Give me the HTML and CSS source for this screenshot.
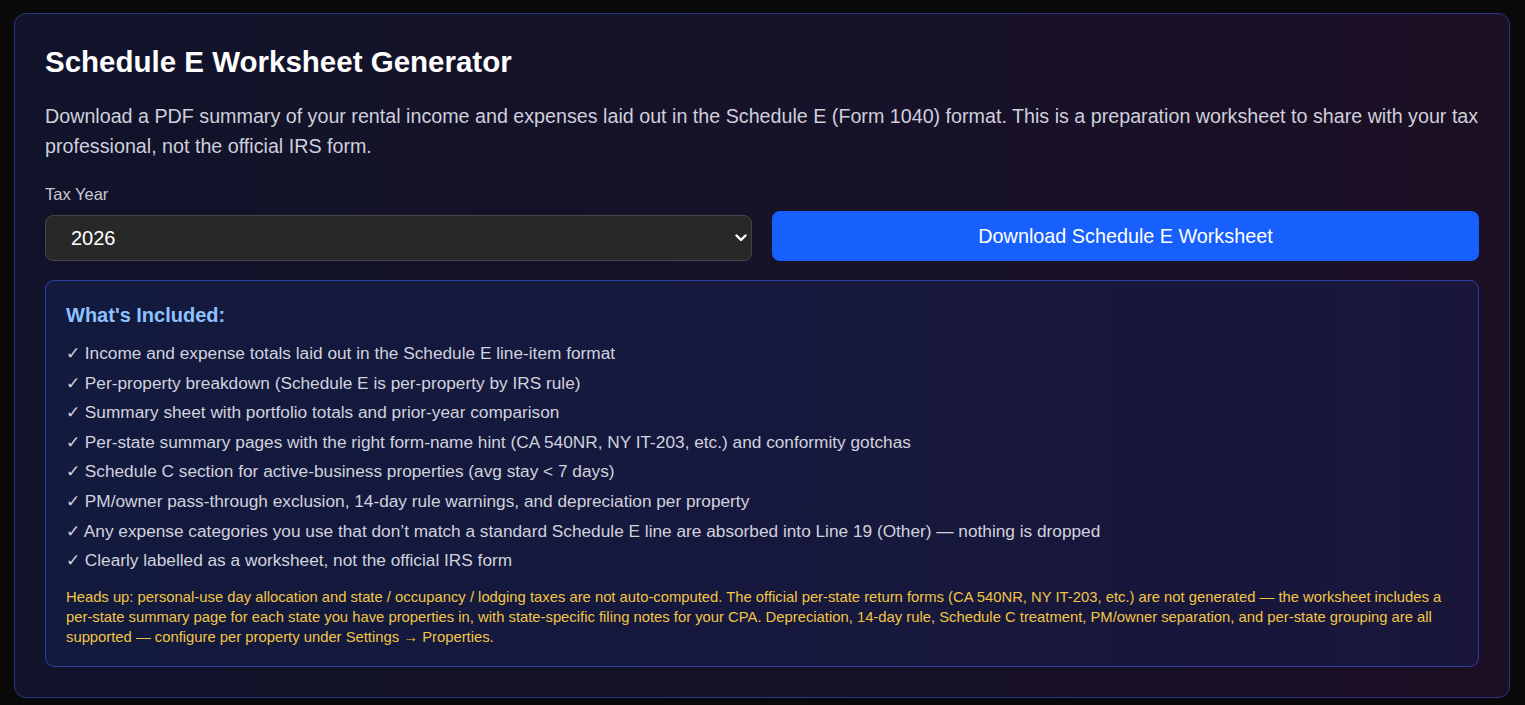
FILE: index.html
```html
<!DOCTYPE html>
<html lang="en">
<head>
<meta charset="utf-8">
<title>Schedule E Worksheet Generator</title>
<link rel="stylesheet" href="styles.css">
</head>
<body>
<div class="card">
  <h1 class="title">Schedule E Worksheet Generator</h1>
  <p class="desc">Download a PDF summary of your rental income and expenses laid out in the Schedule E (Form 1040) format. This is a preparation worksheet to share with your tax professional, not the official IRS form.</p>
  <div class="controls">
    <div class="field">
      <label class="label" for="year">Tax Year</label>
      <div class="select-wrap">
        <select id="year" class="select">
          <option>2026</option>
          <option>2025</option>
          <option>2024</option>
        </select>
        <svg class="chev" width="12" height="8" viewBox="0 0 12 8"><path d="M1.5 1.5 L6 6 L10.5 1.5" fill="none" stroke="#fff" stroke-width="2.4" stroke-linecap="round" stroke-linejoin="round"/></svg>
      </div>
    </div>
    <button class="btn" type="button">Download Schedule E Worksheet</button>
  </div>
  <div class="info">
    <h3 class="info-title">What's Included:</h3>
    <ul class="list">
      <li>✓ Income and expense totals laid out in the Schedule E line-item format</li>
      <li>✓ Per-property breakdown (Schedule E is per-property by IRS rule)</li>
      <li>✓ Summary sheet with portfolio totals and prior-year comparison</li>
      <li>✓ Per-state summary pages with the right form-name hint (CA 540NR, NY IT-203, etc.) and conformity gotchas</li>
      <li>✓ Schedule C section for active-business properties (avg stay &lt; 7 days)</li>
      <li>✓ PM/owner pass-through exclusion, 14-day rule warnings, and depreciation per property</li>
      <li>✓ Any expense categories you use that don’t match a standard Schedule E line are absorbed into Line 19 (Other) — nothing is dropped</li>
      <li>✓ Clearly labelled as a worksheet, not the official IRS form</li>
    </ul>
    <p class="note">Heads up: personal-use day allocation and state / occupancy / lodging taxes are not auto-computed. The official per-state return forms (CA 540NR, NY IT-203, etc.) are not generated — the worksheet includes a per-state summary page for each state you have properties in, with state-specific filing notes for your CPA. Depreciation, 14-day rule, Schedule C treatment, PM/owner separation, and per-state grouping are all supported — configure per property under Settings → Properties.</p>
  </div>
</div>
</body>
</html>
```
FILE: styles.css
```css
* { box-sizing: border-box; }
html, body { margin: 0; padding: 0; }
body {
  background: #0a0a0b;
  font-family: "Liberation Sans", Arial, sans-serif;
  padding: 13px 15px 8px 14px;
}
.card {
  border: 1px solid #2a3688;
  border-radius: 12px;
  background: linear-gradient(90deg, #11132a 0%, #161229 55%, #1c0f24 100%);
  padding: 30px 30px 30px 30px;
}
.title {
  margin: 0;
  font-size: 29.5px;
  font-weight: 700;
  color: #ffffff;
  line-height: 36px;
}
.desc {
  margin: 21px 0 0;
  font-size: 19.7px;
  line-height: 30px;
  color: #cfcfdc;
}
.controls {
  display: grid;
  grid-template-columns: 1fr 1fr;
  gap: 20px;
  align-items: end;
  margin-top: 23px;
}
.label {
  display: block;
  font-size: 16.5px;
  line-height: 20px;
  color: #c8c8d2;
  margin-bottom: 11px;
}
.select-wrap { position: relative; }
.select {
  width: 100%;
  height: 46px;
  appearance: none;
  -webkit-appearance: none;
  background: #282828;
  border: 1px solid #444448;
  border-radius: 8px;
  color: #ffffff;
  font-family: "Liberation Sans", Arial, sans-serif;
  font-size: 20px;
  padding: 0 24px 0 25px;
}
.chev {
  position: absolute;
  right: 5px;
  top: 19px;
  pointer-events: none;
}
.btn {
  height: 50px;
  background: #1760fe;
  border: none;
  border-radius: 8px;
  color: #ffffff;
  font-family: "Liberation Sans", Arial, sans-serif;
  font-size: 19.8px;
}
.info {
  margin-top: 19px;
  border: 1px solid #2c40a6;
  border-radius: 9px;
  background: linear-gradient(90deg, #121a3e 0%, #16183c 60%, #19163a 100%);
  padding: 22px 20px 19px 20px;
}
.info-title {
  margin: 0;
  font-size: 20px;
  line-height: 24px;
  font-weight: 700;
  color: #8ec2ff;
}
.list {
  list-style: none;
  margin: 12px 0 0;
  padding: 0;
}
.list li {
  font-size: 17.25px;
  line-height: 29.6px;
  color: #d2d2de;
}
.note {
  margin: 11px 0 0;
  font-size: 14.8px;
  line-height: 20px;
  color: #f2c544;
}
```
